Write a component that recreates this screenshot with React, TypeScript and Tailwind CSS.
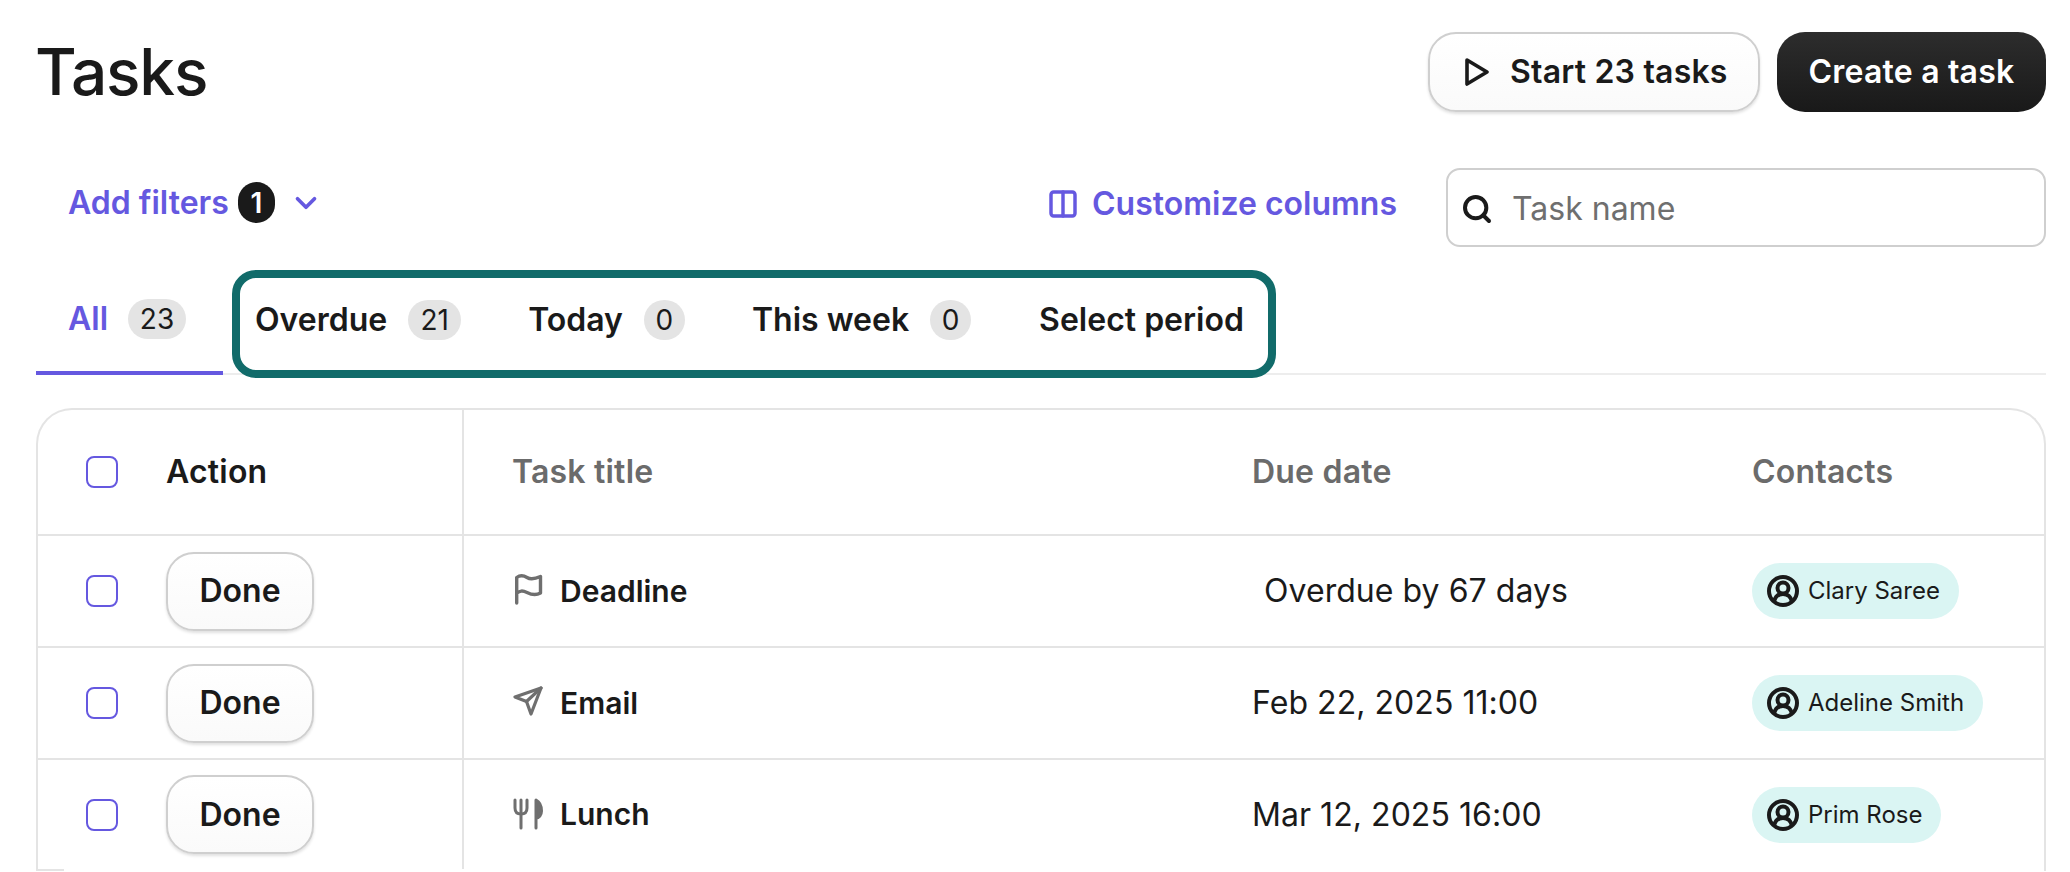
import { ChevronDown, Columns2, Search } from 'lucide-react';

const tabs = [
  { label: 'Overdue', count: '21', gap: 'ml-[32px]', badge: 'w-[53px]' },
  { label: 'Today', count: '0', gap: 'ml-[67px]', badge: 'w-[41px]' },
  { label: 'This week', count: '0', gap: 'ml-[67px]', badge: 'w-[41px]' },
];

const rows = [
  { title: 'Deadline', icon: 'flag', due: 'Overdue by 67 days', contact: 'Clary Saree' },
  { title: 'Email', icon: 'send', due: 'Feb 22, 2025 11:00', contact: 'Adeline Smith' },
  { title: 'Lunch', icon: 'lunch', due: 'Mar 12, 2025 16:00', contact: 'Prim Rose' },
];

function Checkbox() {
  return <span className="block w-[32px] h-[32px] shrink-0 rounded-[8px] border-2 border-[#6558e0] bg-white" />;
}

function TaskIcon({ name }: { name: string }) {
  if (name === 'flag') {
    return (
      <svg viewBox="0 0 30 34" className="w-[30px] h-[34px]" fill="none" stroke="#6f6f6f" strokeWidth="3.4" strokeLinecap="round" strokeLinejoin="round">
        <path d="M3.7 29V3.5C7 1 10 1 14 3.5S22 5 27.5 2.5V19C23 21.5 19 21 14 18.5S7 17 3.7 19" />
      </svg>
    );
  }
  if (name === 'send') {
    return (
      <svg viewBox="0 0 30 34" className="w-[30px] h-[34px]" fill="none" stroke="#6f6f6f" strokeWidth="3.2" strokeLinecap="round" strokeLinejoin="round">
        <path d="M28 2 2 11l11.5 4.5L18 28z" />
        <path d="M28 2 13.5 15.5" />
      </svg>
    );
  }
  return (
    <svg viewBox="0 0 30 34" className="w-[30px] h-[34px]" fill="none" stroke="#6f6f6f" strokeWidth="3" strokeLinecap="round" strokeLinejoin="round">
      <path d="M2 2v8c0 4 2 6 6 6s6-2 6-6V2" />
      <path d="M8 2v28" />
      <path d="M23 30V2c4 2 5.500 7 5.500 11s-2.500 7-5.500 7z" fill="#6f6f6f" />
    </svg>
  );
}

function ContactIcon() {
  return (
    <svg viewBox="0 0 32 32" className="w-[32px] h-[32px] shrink-0" fill="none" stroke="#1a1a1a" strokeWidth="4">
      <circle cx="16" cy="16" r="14" />
      <circle cx="16" cy="13" r="5.5" />
      <path d="M7 27c1-5 4-8 9-8s8 3 9 8" />
    </svg>
  );
}

function Row({ title, icon, due, contact }: (typeof rows)[number]) {
  return (
    <div className="flex h-[112px] last:h-[109px] border-b-2 border-[#e4e4e4] last:border-b-0">
      <div className="flex items-center w-[426px] shrink-0 border-r-2 border-[#e4e4e4] pl-[48px]">
        <Checkbox />
        <button className="ml-[48px] w-[148px] h-[79px] rounded-[28px] border-2 border-[#cfcfcf] bg-gradient-to-b from-white to-[#fafafa] shadow-[0_2px_3px_rgba(0,0,0,0.12)] text-[32px] font-semibold text-[#1a1a1a]">
          Done
        </button>
      </div>
      <div className="flex items-center w-[788px] shrink-0 pl-[49px] text-[30px] font-semibold text-[#1a1a1a]">
        <span className="flex w-[47px] shrink-0">
          <TaskIcon name={icon} />
        </span>
        {title}
      </div>
      <div className={`flex items-center w-[500px] shrink-0 text-[32px] text-[#1a1a1a] tracking-[0.05px] ${due.startsWith('Overdue') ? 'pl-[12px]' : ''}`}>
        {due}
      </div>
      <div className="flex items-center">
        <span className="flex items-center h-[56px] rounded-full bg-[#daf5f3] pl-[15px] pr-[19px] gap-[9px] text-[24px] text-[#1a1a1a]">
          <ContactIcon />
          {contact}
        </span>
      </div>
    </div>
  );
}

export default function App() {
  return (
    <div className="relative w-[2070px] h-[872px] overflow-hidden bg-white pl-[36px] pr-[24px] text-[#1a1a1a] font-['Inter',sans-serif]">
      <div className="flex justify-between pt-[32px]">
        <h1 className="-ml-[1px] text-[64px] leading-[80px] font-medium tracking-[-1.2px]">Tasks</h1>
        <div className="flex gap-[17px] text-[32px] font-semibold tracking-[0.2px]">
          <button className="flex items-center w-[332px] h-[80px] pl-[35px] rounded-[28px] border-2 border-[#cfcfcf] bg-gradient-to-b from-white to-[#fafafa] shadow-[0_2px_3px_rgba(0,0,0,0.12)]">
            <svg viewBox="0 0 24 28" className="w-[24px] h-[28px]" fill="none" stroke="#1a1a1a" strokeWidth="3.6" strokeLinejoin="round">
              <path d="M2 2l20 12L2 26z" />
            </svg>
            <span className="ml-[21px]">Start 23 tasks</span>
          </button>
          <button className="w-[269px] h-[80px] rounded-[28px] bg-gradient-to-b from-[#2d2d2d] to-[#191919] text-white">Create a task</button>
        </div>
      </div>

      <div className="flex items-center mt-[56px] h-[79px]">
        <div className="flex items-center pl-[32px] text-[32px] font-semibold text-[#6558e0] -translate-y-[5px]">
          Add filters
          <span className="ml-[9px] flex items-center justify-center w-[37px] h-[41px] rounded-full bg-[#1a1a1a] text-white text-[28px]">1</span>
          <ChevronDown className="ml-[14px] w-[34px] h-[34px]" strokeWidth={2.6} />
        </div>
        <div className="ml-auto flex items-center text-[32px] font-semibold text-[#6558e0] -translate-y-[4px]">
          <Columns2 className="w-[32px] h-[32px]" strokeWidth={2.6} />
          <span className="ml-[13px]">Customize columns</span>
        </div>
        <div className="ml-[49px] flex items-center w-[600px] h-[79px] rounded-[14px] border-2 border-[#cfcfcf] pl-[13px] pt-[2px]">
          <Search className="w-[32px] h-[32px] text-[#1a1a1a]" strokeWidth={3} />
          <span className="ml-[19px] text-[32px] text-[#6f6f6f]">Task name</span>
        </div>
      </div>

      <div className="relative flex h-[128px] border-b-2 border-[#ededed] text-[32px] font-semibold">
        <div className="flex items-center w-[187px] h-[128px] pt-[20px] pl-[32px] border-b-4 border-[#6558e0] text-[#6558e0]">
          All
          <span className="ml-[20px] flex items-center justify-center w-[58px] h-[40px] rounded-full bg-[#e4e4e4] text-[28px] font-normal text-[#1a1a1a]">23</span>
        </div>
        <div className="flex items-center pt-[20px]">
          {tabs.map((t) => (
            <div key={t.label} className={`flex items-center ${t.gap}`}>
              {t.label}
              <span className={`ml-[21px] flex items-center justify-center ${t.badge} h-[40px] rounded-full bg-[#e4e4e4] text-[28px] font-normal`}>{t.count}</span>
            </div>
          ))}
          <span className="ml-[68px]">Select period</span>
        </div>
        {/* highlight around the period tabs */}
        <div className="absolute left-[196px] top-[23px] w-[1044px] h-[108px] rounded-[24px] border-8 border-[#116b6a] pointer-events-none" />
      </div>

      <div className="mt-[33px] rounded-t-[36px] border-x-2 border-t-2 border-[#e4e4e4]">
        <div className="flex h-[126px] border-b-2 border-[#e4e4e4] text-[32px] font-semibold">
          <div className="flex items-center w-[426px] shrink-0 border-r-2 border-[#e4e4e4] pl-[48px]">
            <Checkbox />
            <span className="ml-[48px] tracking-[0.2px]">Action</span>
          </div>
          <div className="flex items-center w-[788px] shrink-0 pl-[48px] text-[#6b6b6b] tracking-[0.2px]">Task title</div>
          <div className="flex items-center w-[500px] shrink-0 text-[#6b6b6b] tracking-[0.2px]">Due date</div>
          <div className="flex items-center text-[#6b6b6b] tracking-[0.2px]">Contacts</div>
        </div>
        <div>
          {rows.map((r) => (
            <Row key={r.title} {...r} />
          ))}
        </div>
        <div className="w-[26px] h-[2px] bg-[#e4e4e4]" />
      </div>
    </div>
  );
}
